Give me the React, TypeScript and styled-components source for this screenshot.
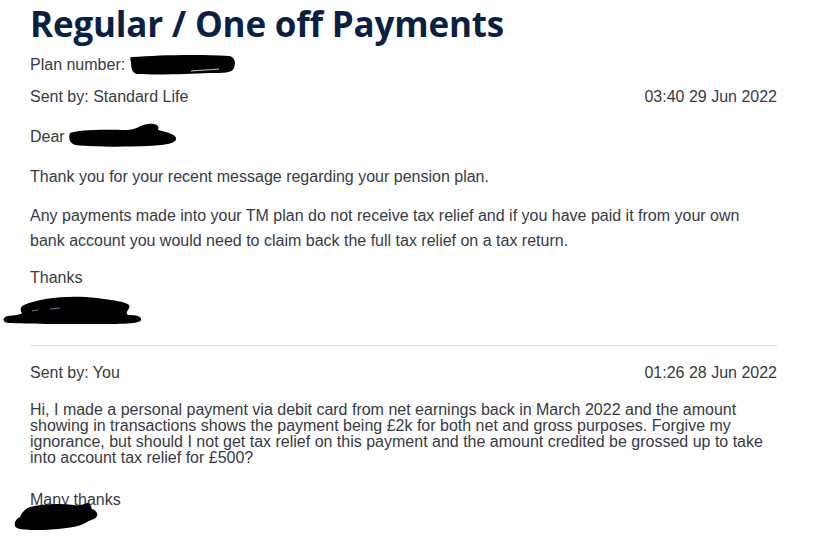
import React from "react";
import styled, { createGlobalStyle } from "styled-components";

const Global = createGlobalStyle`
  html, body { margin: 0; padding: 0; background: #ffffff; }
  body { font-family: "Liberation Sans", Arial, sans-serif; color: #373a44; }
`;

const Page = styled.div`
  width: 747px;
  padding: 0 0 0 30px;
`;

const Title = styled.h1`
  margin: 0;
  padding-top: 2px;
  font-family: "Open Sans", "Noto Sans", sans-serif;
  font-weight: 700;
  font-size: 35px;
  line-height: 44px;
  color: #0b1f45;
  letter-spacing: -0.2px;
`;

const MetaLine = styled.div`
  display: flex;
  align-items: center;
  font-size: 16px;
  line-height: 24px;
  margin-top: 7px;
`;

const MessageHeader = styled.div<{ $top: number }>`
  display: flex;
  justify-content: space-between;
  font-size: 16px;
  line-height: 24px;
  margin-top: ${(p) => p.$top}px;
`;

const Para = styled.p<{ $top?: number }>`
  margin: ${(p) => p.$top ?? 15}px 0 0 0;
  font-size: 16px;
  line-height: 25px;
  display: flex;
  align-items: center;
`;

const PlainBody = styled.div`
  margin-top: 17px;
  font-size: 16px;
  line-height: 16px;
  white-space: pre-wrap;
`;

const SignOff = styled.div`
  margin-top: 26px;
  font-size: 16px;
  line-height: 16px;
`;

const Divider = styled.hr`
  border: none;
  border-top: 1px solid #dedede;
  margin: 20px 0 0 0;
`;

const Redact = styled.svg<{ $shift?: number; $top?: number }>`
  display: block;
  margin-left: ${(p) => p.$shift ?? 0}px;
  margin-top: ${(p) => p.$top ?? 0}px;
`;

const PlanBlob = () => (
  <Redact width="107" height="22" viewBox="0 0 107 22" $shift={4}>
    <path
      d="M3 3 C 30 1, 70 0, 100 2 C 106 3, 107 8, 105 14 C 103 19, 95 19, 80 19 C 60 20, 30 21, 8 20 C 3 19, 2 14, 2 8 C 1 5, 1 3, 3 3 Z"
      fill="#000"
    />
    <path d="M62 17 C 72 16, 82 16, 90 15" stroke="#fff" strokeWidth="1" fill="none" opacity="0.8" />
  </Redact>
);

const DearBlob = () => (
  <Redact width="110" height="26" viewBox="0 0 110 26" $shift={3}>
    <path
      d="M2 10 C 10 7, 30 6, 60 7 C 70 6, 72 2, 80 1 C 88 0, 92 3, 90 7 C 98 9, 107 11, 108 15 C 109 20, 100 22, 80 23 C 55 24, 25 24, 8 22 C 2 21, 0 16, 2 10 Z"
      fill="#000"
    />
  </Redact>
);

const SignatureBlob = () => (
  <Redact width="140" height="32" viewBox="0 0 140 32" $shift={-28} $top={3}>
    <path
      d="M22 12 C 40 4, 70 2, 95 5 C 110 7, 125 9, 127 12 C 129 16, 122 19, 126 22 C 134 22, 140 23, 139 27 C 138 31, 120 31, 90 31 C 60 31, 25 31, 6 30 C 0 29, 0 24, 6 23 C 12 22, 18 22, 20 20 C 18 17, 18 14, 22 12 Z"
      fill="#000"
    />
    <path d="M30 18 L36 17 M48 16 L58 15" stroke="#6a7a9a" strokeWidth="1" />
  </Redact>
);

const LastBlob = () => (
  <Redact width="84" height="27" viewBox="0 0 84 27" $shift={-16} $top={-5}>
    <path
      d="M16 4 C 28 1, 45 0, 60 2 C 66 3, 70 1, 73 0 C 77 0, 77 4, 78 6 C 82 7, 84 10, 83 13 C 82 16, 76 17, 73 19 C 66 24, 50 26, 30 27 C 14 27, 2 27, 1 23 C 0 19, 2 16, 6 14 C 8 9, 11 6, 16 4 Z"
      fill="#000"
    />
  </Redact>
);

const secondText =
  "Hi, I made a personal payment via debit card from net earnings back in March 2022 and the amount\nshowing in transactions shows the payment being £2k for both net and gross purposes. Forgive my\nignorance, but should I not get tax relief on this payment and the amount credited be grossed up to take\ninto account tax relief for £500?";

export default function App() {
  return (
    <>
      <Global />
      <Page>
        <Title>Regular / One off Payments</Title>
        <MetaLine>
          Plan number: <PlanBlob />
        </MetaLine>
        <MessageHeader $top={8}>
          <span>Sent by: Standard Life</span>
          <span>03:40 29 Jun 2022</span>
        </MessageHeader>
        <Para $top={14}>
          Dear <DearBlob />
        </Para>
        <Para $top={15}>Thank you for your recent message regarding your pension plan.</Para>
        <Para $top={14}>
          Any payments made into your TM plan do not receive tax relief and if you have paid it from your own bank
          account you would need to claim back the full tax relief on a tax return.
        </Para>
        <Para $top={12}>Thanks</Para>
        <SignatureBlob />
        <Divider />
        <MessageHeader $top={15}>
          <span>Sent by: You</span>
          <span>01:26 28 Jun 2022</span>
        </MessageHeader>
        <PlainBody>{secondText}</PlainBody>
        <SignOff>Many thanks</SignOff>
        <LastBlob />
      </Page>
    </>
  );
}
